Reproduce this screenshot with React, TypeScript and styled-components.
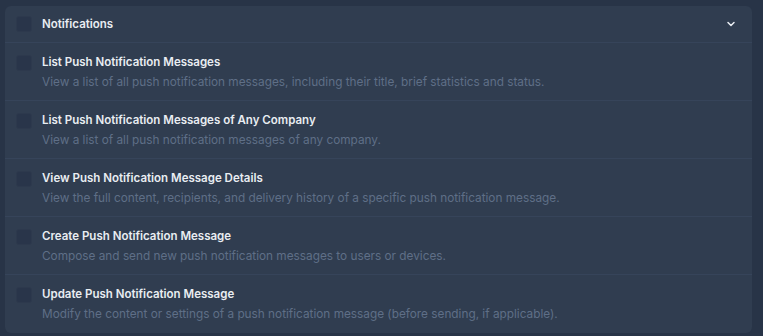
import styled, { createGlobalStyle } from "styled-components";

const Global = createGlobalStyle`
    html, body { margin: 0; padding: 0; background: #283447; }
    body { font-family: Inter, "Noto Sans", sans-serif; }
`;

const Page = styled.div`
    padding: 6px 11px 5px 5px;
    width: 763px;
    height: 336px;
    box-sizing: border-box;
`;

const Card = styled.div`
    background: #303d50;
    border-radius: 6px;
    overflow: hidden;
`;

const Header = styled.div`
    display: flex;
    align-items: center;
    height: 37px;
    padding: 0 16px 0 11px;
    border-bottom: 1px solid #36445a;
    box-sizing: border-box;
`;

const Box = styled.span`
    width: 16px;
    height: 16px;
    flex: none;
    border-radius: 3px;
    background: #29354a;
    border: 1px solid #2d394d;
    box-sizing: border-box;
`;

const HeaderTitle = styled.div`
    flex: 1;
    margin-left: 10px;
    font-size: 11.5px;
    font-weight: 600;
    color: #e9edf2;
`;

const Row = styled.div<{ last?: boolean }>`
    display: flex;
    align-items: flex-start;
    padding: 12px 11px 0;
    height: 58px;
    box-sizing: border-box;
    border-bottom: ${p => (p.last ? "none" : "1px solid #36445a")};
`;

const Text = styled.div`
    margin-left: 10px;
    display: flex;
    flex-direction: column;
    gap: 5px;
`;

const Title = styled.div`
    font-size: 11.5px;
    font-weight: 600;
    line-height: 15px;
    color: #e9edf2;
`;

const Desc = styled.div`
    font-size: 11.8px;
    line-height: 15px;
    color: #5f6f87;
`;

const items = [
    ["List Push Notification Messages", "View a list of all push notification messages, including their title, brief statistics and status."],
    ["List Push Notification Messages of Any Company", "View a list of all push notification messages of any company."],
    ["View Push Notification Message Details", "View the full content, recipients, and delivery history of a specific push notification message."],
    ["Create Push Notification Message", "Compose and send new push notification messages to users or devices."],
    ["Update Push Notification Message", "Modify the content or settings of a push notification message (before sending, if applicable)."],
];

export default function App() {
    return (
        <Page>
            <Global />
            <Card>
                <Header>
                    <Box />
                    <HeaderTitle>Notifications</HeaderTitle>
                    <svg width="10" height="10" viewBox="0 0 10 10">
                        <path d="M2 3.5 L5 6.5 L8 3.5" fill="none" stroke="#e9edf2" strokeWidth="1.5" strokeLinecap="round" strokeLinejoin="round" />
                    </svg>
                </Header>
                {items.map(([t, d], i) => (
                    <Row key={t} last={i === items.length - 1}>
                        <Box />
                        <Text>
                            <Title>{t}</Title>
                            <Desc>{d}</Desc>
                        </Text>
                    </Row>
                ))}
            </Card>
        </Page>
    );
}
